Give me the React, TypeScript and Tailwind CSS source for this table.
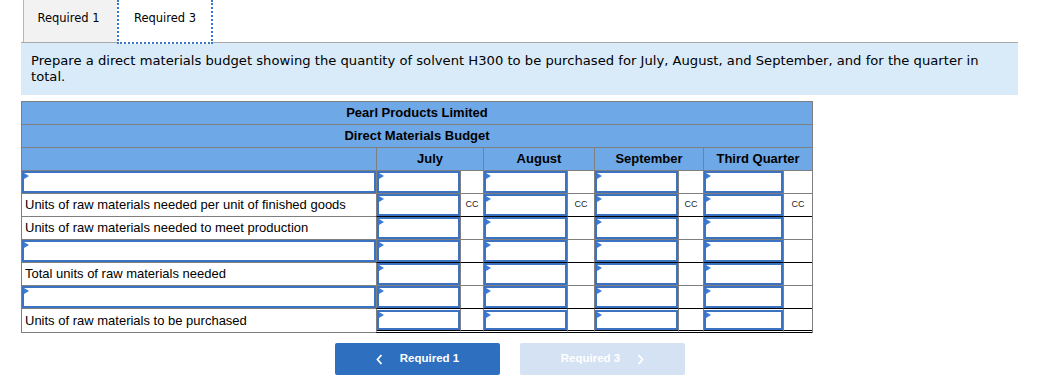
import React from "react";

const GRAY = "border-[#7f7f7f]";

function InputBox({ short }: { short?: boolean }) {
  return (
    <div
      className={`relative w-full border-2 border-[#3b72c1] bg-white ${short ? "h-[20px]" : "h-[22px]"}`}
    >
      <div className="absolute left-0 top-0 h-0 w-0 border-y-[3.5px] border-l-[5px] border-y-transparent border-l-[#3a7bd8]" />
    </div>
  );
}

type Row = { label: string | null; cc: boolean; blackTop: boolean; last?: boolean };

const rows: Row[] = [
  { label: null, cc: false, blackTop: false },
  { label: "Units of raw materials needed per unit of finished goods", cc: true, blackTop: false },
  { label: "Units of raw materials needed to meet production", cc: false, blackTop: true },
  { label: null, cc: false, blackTop: false },
  { label: "Total units of raw materials needed", cc: false, blackTop: true },
  { label: null, cc: false, blackTop: false },
  { label: "Units of raw materials to be purchased", cc: false, blackTop: true, last: true },
];

export default function App() {
  return (
    <div className="h-[379px] w-[1048px] overflow-hidden bg-white pl-[21px] text-black">
      {/* Tabs */}
      <div className="flex h-[43px] pl-[2px] font-['DejaVu_Sans',Verdana,sans-serif] text-[11.5px]">
        <div className="flex h-[42px] w-[94px] items-center justify-center border-l border-[#b5b5b5] bg-[#f2f2f2] pb-[4px] pr-[4px]">
          Required 1
        </div>
        <div className="flex h-[44px] w-[96px] items-center justify-center border-x-2 border-b-2 border-dotted border-[#3a78c8] bg-white pb-[4px]">
          Required 3
        </div>
      </div>
      {/* Instructions */}
      <div className="-mt-[1px] w-[997px] border-t border-[#a9a9a9] bg-[#d9ebf9] py-[10px] pl-[10px] pr-[30px] font-['DejaVu_Sans',Verdana,sans-serif] text-[13.15px] leading-[16px]">
        Prepare a direct materials budget showing the quantity of solvent H300 to be purchased for July, August, and September, and for the quarter in total.
      </div>

      {/* Table */}
      <table
        className={`mt-[6px] table-fixed border-separate border-spacing-0 border-r ${GRAY} font-['Liberation_Sans',Arial,sans-serif] text-[13px]`}
      >
        <colgroup>
          <col className="w-[355px]" />
          <col className="w-[84px]" />
          <col className="w-[23px]" />
          <col className="w-[84px]" />
          <col className="w-[27px]" />
          <col className="w-[84px]" />
          <col className="w-[25px]" />
          <col className="w-[80px]" />
          <col className="w-[29px]" />
        </colgroup>
        <tbody>
          <tr className="h-[23px]">
            <td colSpan={9} className={`border-l border-t ${GRAY} bg-[#6fa8e7] p-0 text-center font-bold`}>
              Pearl Products Limited
            </td>
          </tr>
          <tr className="h-[23px]">
            <td colSpan={9} className={`border-l border-t ${GRAY} bg-[#6fa8e7] p-0 text-center font-bold`}>
              Direct Materials Budget
            </td>
          </tr>
          <tr className="h-[23px]">
            <td className={`border-l border-t ${GRAY} bg-[#6fa8e7] p-0`} />
            {["July", "August", "September", "Third Quarter"].map((h) => (
              <td key={h} colSpan={2} className={`border-l border-t ${GRAY} bg-[#6fa8e7] p-0 text-center font-bold`}>
                {h}
              </td>
            ))}
          </tr>
          {rows.map((r, i) => (
            <tr key={i} className={r.last ? "h-[22px]" : "h-[23px]"}>
              <td
                className={`border-l border-t ${GRAY} p-0 align-middle ${r.last ? "border-b" : ""}`}
              >
                {r.label === null ? (
                  <InputBox />
                ) : (
                  <div className={`pl-[3px] ${r.last ? "leading-[23px]" : "leading-[22px]"}`}>{r.label}</div>
                )}
              </td>
              {[0, 1, 2, 3].map((c) => (
                <React.Fragment key={c}>
                  <td
                    className={`border-l border-l-[#7f7f7f] border-t p-0 ${
                      r.blackTop ? "border-t-black" : "border-t-[#7f7f7f]"
                    } ${r.last ? "border-b-[3px] border-double border-b-black" : ""}`}
                    style={r.last ? { borderLeftStyle: "solid", borderTopStyle: "solid" } : undefined}
                  >
                    <InputBox short={r.last} />
                  </td>
                  <td
                    className={`border-l border-l-[#7f7f7f] border-t p-0 text-center align-middle text-[9px] text-[#222] ${
                      r.blackTop ? "border-t-black" : "border-t-[#7f7f7f]"
                    } ${r.last ? "border-b-[3px] border-double border-b-black" : ""}`}
                    style={r.last ? { borderLeftStyle: "solid", borderTopStyle: "solid" } : undefined}
                  >
                    {r.cc ? "CC" : ""}
                  </td>
                </React.Fragment>
              ))}
            </tr>
          ))}
        </tbody>
      </table>

      {/* Buttons */}
      <div className="mt-[10px] flex gap-[20px] pl-[314px] font-['Liberation_Sans',Arial,sans-serif] text-[11.5px] font-bold text-white">
        <div className="flex h-[32px] w-[165px] items-center justify-center gap-[17px] rounded-[2px] bg-[#2e6fbf]">
          <svg width="7" height="11" viewBox="0 0 7 11" fill="none">
            <path d="M5.5 1 L1.5 5.5 L5.5 10" stroke="white" strokeWidth="1.8" />
          </svg>
          <span>Required 1</span>
        </div>
        <div className="flex h-[32px] w-[165px] items-center justify-center gap-[17px] rounded-[2px] bg-[#d5e2f3]">
          <span>Required 3</span>
          <svg width="7" height="11" viewBox="0 0 7 11" fill="none">
            <path d="M1.5 1 L5.5 5.5 L1.5 10" stroke="white" strokeWidth="1.8" />
          </svg>
        </div>
      </div>
    </div>
  );
}
